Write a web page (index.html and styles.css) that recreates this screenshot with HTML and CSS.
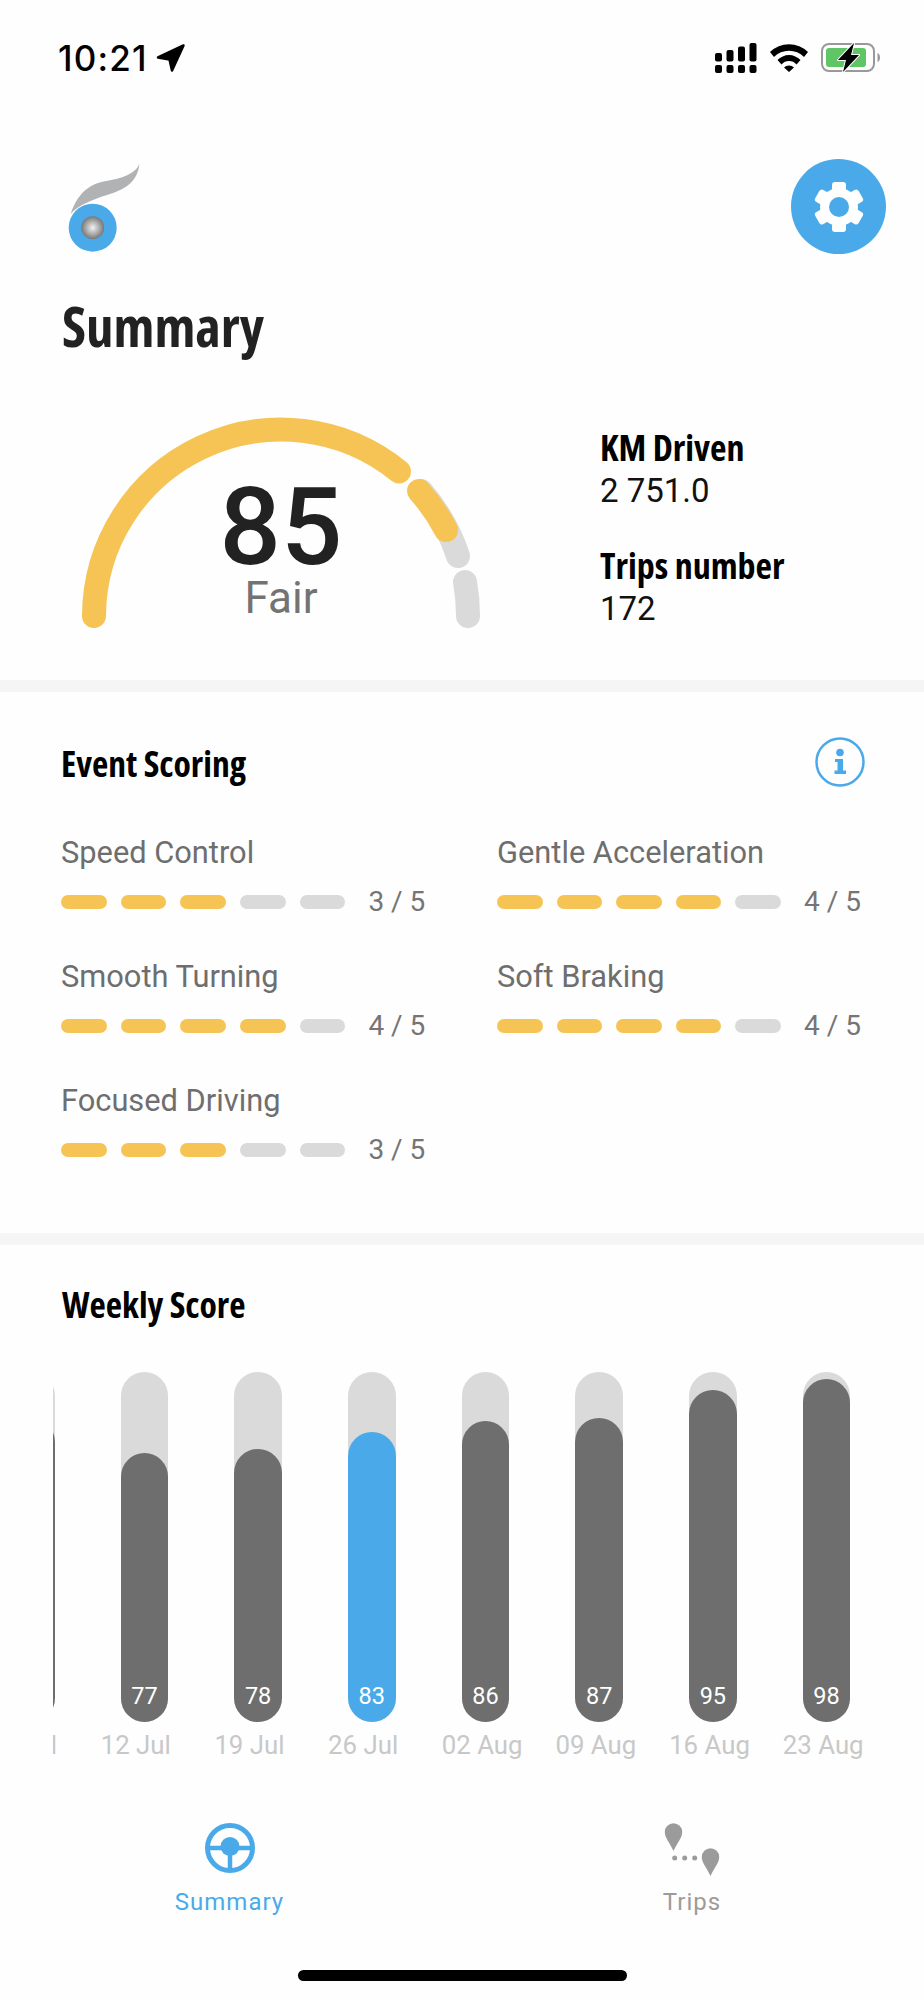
FILE: index.html
```html
<!DOCTYPE html>
<html lang="en">
<head>
<meta charset="utf-8">
<title>Summary</title>
<link rel="stylesheet" href="styles.css">
</head>
<body>
<div class="app">
  <header class="status">
    <div class="status-left">
      <span class="clock">10:21</span>
      <svg class="arrow" viewBox="0 0 30 30" width="30" height="30"><path d="M27.500 2.500 L2 14.500 L13.500 16.500 L16 27.500 Z" fill="#000" stroke="#000" stroke-width="2.500" stroke-linejoin="round"/></svg>
    </div>
    <div class="status-right">
      <svg viewBox="0 0 42 30" width="42" height="30"><g fill="#000"><rect x="0" y="22" width="7" height="8" rx="2"/><rect x="11.500" y="22" width="7" height="8" rx="2"/><rect x="23" y="22" width="7" height="8" rx="2"/><rect x="34.500" y="22" width="7" height="8" rx="2"/><rect x="0" y="10" width="7" height="8.500" rx="2"/><rect x="11.500" y="7" width="7" height="11.500" rx="2"/><rect x="23" y="3.500" width="7" height="15" rx="2"/><rect x="34.500" y="0" width="7" height="18.500" rx="2"/></g></svg>
      <svg viewBox="0 0 38 28" width="38" height="28"><path d="M0 8 A27 27 0 0 1 38 8 L34 13 A21 21 0 0 0 4 13 Z M7.500 16 A16 16 0 0 1 30.500 16 L26.500 20.500 A10 10 0 0 0 11.500 20.500 Z M14 23.500 A7 7 0 0 1 24 23.500 L19 28 Z" fill="#000"/></svg>
      <svg class="battery" viewBox="0 0 60 30" width="60" height="30"><rect x="1" y="1" width="52" height="27" rx="7" fill="none" stroke="#999" stroke-width="2"/><rect x="5" y="5" width="40" height="19" rx="3" fill="#5fc565"/><path d="M56.500 10 C58.500 11 59 12.500 59 14.500 C59 16.500 58.500 18 56.500 19 Z" fill="#999"/><path d="M33 0 L17 17 L25 17 L22 29 L38 12 L30 12 Z" fill="#000" stroke="#fff" stroke-width="2" stroke-linejoin="round" paint-order="stroke"/></svg>
    </div>
  </header>

  <div class="brand-row">
    <svg class="logo" viewBox="0 0 76 92" width="76" height="92">
      <defs><radialGradient id="ball"><stop offset="0" stop-color="#f2f2f2"/><stop offset="1" stop-color="#777"/></radialGradient></defs>
      <path d="M73.300 1.700 C69 14 50 17 40 19 C28 21 13 27 4.700 52 C12 43 28 37 41 33 C58 28 72 20 73.300 1.700 Z" fill="#b1b2b4"/>
      <circle cx="26.700" cy="65.700" r="24" fill="#4aaae9"/>
      <circle cx="26.700" cy="65.700" r="11.500" fill="url(#ball)"/>
    </svg>
    <button class="gear" type="button" aria-label="Settings">
      <svg viewBox="0 0 60 60" width="60" height="60">
        <g fill="#fff">
          <circle cx="30" cy="30" r="19"/>
          <rect x="23" y="5" width="14" height="50" rx="3"/>
          <rect x="23" y="5" width="14" height="50" rx="3" transform="rotate(60 30 30)"/>
          <rect x="23" y="5" width="14" height="50" rx="3" transform="rotate(120 30 30)"/>
        </g>
        <circle cx="30" cy="30" r="10" fill="#4aaae9"/>
      </svg>
    </button>
  </div>

  <h1 class="title">Summary</h1>

  <section class="hero">
    <div class="gauge">
      <svg viewBox="0 0 424 224" width="424" height="224">
        <g fill="none" stroke-width="24" stroke-linecap="round">
          <path d="M399 200 A187 187 0 0 0 396 166" stroke="#dadada"/>
          <path d="M389 140 A187 187 0 0 0 352 75" stroke="#dadada"/>
          <path d="M25 200 A187 187 0 0 1 330 55.500" stroke="#f6c455"/>
          <path d="M350 75 A187 187 0 0 1 377 114" stroke="#f6c455"/>
        </g>
      </svg>
      <div class="score">85</div>
      <div class="score-label">Fair</div>
    </div>
    <div class="stats">
      <div class="stat">
        <h3 class="stat-title">KM Driven</h3>
        <div class="stat-value">2 751.0</div>
      </div>
      <div class="stat">
        <h3 class="stat-title">Trips number</h3>
        <div class="stat-value">172</div>
      </div>
    </div>
  </section>

  <div class="divider"></div>

  <section class="events">
    <div class="section-head">
      <h2 class="section-title">Event Scoring</h2>
      <svg class="info" viewBox="0 0 50 50" width="50" height="50"><circle cx="25" cy="25" r="23.500" fill="none" stroke="#4aaae9" stroke-width="2.500"/><circle cx="25" cy="15.500" r="3.800" fill="#4aaae9"/><path d="M20 22 H28 V33.500 H31 V37 H19.500 V33.500 H22.500 V25 H20 Z" fill="#4aaae9"/></svg>
    </div>
    <div class="event-grid">
      <div class="event">
        <div class="event-name">Speed Control</div>
        <div class="event-line"><span class="dash on"></span><span class="dash on"></span><span class="dash on"></span><span class="dash"></span><span class="dash"></span><span class="event-score">3 / 5</span></div>
      </div>
      <div class="event">
        <div class="event-name">Gentle Acceleration</div>
        <div class="event-line"><span class="dash on"></span><span class="dash on"></span><span class="dash on"></span><span class="dash on"></span><span class="dash"></span><span class="event-score">4 / 5</span></div>
      </div>
      <div class="event">
        <div class="event-name">Smooth Turning</div>
        <div class="event-line"><span class="dash on"></span><span class="dash on"></span><span class="dash on"></span><span class="dash on"></span><span class="dash"></span><span class="event-score">4 / 5</span></div>
      </div>
      <div class="event">
        <div class="event-name">Soft Braking</div>
        <div class="event-line"><span class="dash on"></span><span class="dash on"></span><span class="dash on"></span><span class="dash on"></span><span class="dash"></span><span class="event-score">4 / 5</span></div>
      </div>
      <div class="event">
        <div class="event-name">Focused Driving</div>
        <div class="event-line"><span class="dash on"></span><span class="dash on"></span><span class="dash on"></span><span class="dash"></span><span class="dash"></span><span class="event-score">3 / 5</span></div>
      </div>
    </div>
  </section>

  <div class="divider"></div>

  <section class="weekly">
    <h2 class="section-title">Weekly Score</h2>
    <div class="chart">
      <div class="chart-track">
        <div class="week"><div class="bar"><div class="fill" style="height:87%"><span class="val">87</span></div></div><div class="date">05 Jul</div></div>
        <div class="week"><div class="bar"><div class="fill" style="height:77%"><span class="val">77</span></div></div><div class="date">12 Jul</div></div>
        <div class="week"><div class="bar"><div class="fill" style="height:78%"><span class="val">78</span></div></div><div class="date">19 Jul</div></div>
        <div class="week"><div class="bar"><div class="fill current" style="height:83%"><span class="val">83</span></div></div><div class="date">26 Jul</div></div>
        <div class="week"><div class="bar"><div class="fill" style="height:86%"><span class="val">86</span></div></div><div class="date">02 Aug</div></div>
        <div class="week"><div class="bar"><div class="fill" style="height:87%"><span class="val">87</span></div></div><div class="date">09 Aug</div></div>
        <div class="week"><div class="bar"><div class="fill" style="height:95%"><span class="val">95</span></div></div><div class="date">16 Aug</div></div>
        <div class="week"><div class="bar"><div class="fill" style="height:98%"><span class="val">98</span></div></div><div class="date">23 Aug</div></div>
      </div>
    </div>
  </section>

  <nav class="tabs">
    <div class="tab active">
      <svg viewBox="0 0 50 50" width="50" height="50"><circle cx="25" cy="25" r="22.500" fill="none" stroke="#4aaae9" stroke-width="5"/><path d="M3 25 H47 M25 25 V47" stroke="#4aaae9" stroke-width="4.500" fill="none"/><circle cx="25" cy="23.500" r="9.500" fill="#4aaae9"/></svg>
      <span class="tab-label">Summary</span>
    </div>
    <div class="tab">
      <svg viewBox="0 0 56 54" width="56" height="54"><g fill="#9b9b9b"><path d="M9.500 28 C6 20 0.800 15 0.800 9 A8.700 8.700 0 0 1 18.200 9 C18.200 15 13 20 9.500 28 Z"/><path d="M46.500 53 C43 45 37.800 40 37.800 34 A8.700 8.700 0 0 1 55.200 34 C55.200 40 50 45 46.500 53 Z"/><circle cx="10.700" cy="35" r="2.500"/><circle cx="20.700" cy="35" r="2.500"/><circle cx="30.700" cy="35" r="2.500"/></g></svg>
      <span class="tab-label">Trips</span>
    </div>
  </nav>

  <div class="home-wrap"><div class="home"></div></div>
</div>
</body>
</html>
```

FILE: styles.css
```css
* { box-sizing: border-box; }
html, body { margin: 0; padding: 0; background: #fefefe; }
.app { width: 924px; height: 2000px; overflow: hidden; font-family: "Roboto", sans-serif; color: #222; }
h1, h2, h3 { margin: 0; font-family: "Open Sans", sans-serif; font-stretch: 75%; font-weight: 700; }

.status { height: 116px; display: flex; justify-content: space-between; align-items: center; padding: 0 43px 0 58px; }
.status-left { display: flex; align-items: center; gap: 8px; }
.clock { font-family: "Inter", sans-serif; font-size: 35px; font-weight: 500; line-height: 40px; color: #000; letter-spacing: 1.2px; }
.status-right { display: flex; align-items: center; gap: 13px; }

.brand-row { display: flex; justify-content: space-between; align-items: flex-start; padding: 43px 38px 0 66px; height: 137px; }
.logo { margin-top: 3px; display: block; }
.gear { width: 95px; height: 95px; border: 0; padding: 0; border-radius: 50%; background: #4aaae9; display: flex; align-items: center; justify-content: center; }

.title { font-size: 54.800px; line-height: 70px; color: #222; padding-left: 62px; margin-top: 38px; }

.hero { display: flex; align-items: flex-start; padding: 0 0 0 69px; margin-top: 55px; height: 264px; }
.gauge { position: relative; width: 531px; height: 224px; }
.gauge svg { display: block; }
.score { position: absolute; left: 0; width: 424px; text-align: center; top: 48px; font-size: 108px; line-height: 126px; font-weight: 500; color: #222; }
.score-label { position: absolute; left: 0; width: 424px; text-align: center; top: 156px; font-size: 44px; line-height: 52px; color: #737373; }
.stats { display: flex; flex-direction: column; gap: 33px; margin-top: 9px; }
.stat-title { font-size: 36px; line-height: 46px; color: #000; }
.stat-value { font-size: 33px; line-height: 39px; color: #111; font-weight: 400; }

.divider { height: 12px; background: #f5f5f5; }

.events { height: 541px; padding: 0 62px 0 61px; }
.section-head { display: flex; justify-content: space-between; align-items: center; height: 142px; }
.section-title { font-size: 35.600px; line-height: 46px; color: #000; }
.info { margin-right: -3px; margin-top: -3px; }
.event-grid { display: grid; grid-template-columns: 436px 364px; row-gap: 43.500px; margin-top: 1px; }
.event-name { font-size: 30.800px; line-height: 36px; color: #6e6e6e; }
.event-line { display: flex; align-items: center; gap: 14px; margin-top: 16.500px; height: 28px; }
.dash { width: 45.700px; height: 14px; border-radius: 7px; background: #dadada; }
.dash.on { background: #f6c455; }
.event-score { font-size: 28px; line-height: 28px; color: #757575; margin-left: 9px; white-space: nowrap; }

.weekly { height: 534px; padding: 36px 0 0; }
.weekly .section-title { padding-left: 62px; }
.chart { margin: 45px 0 0 53px; overflow: hidden; width: 871px; }
.chart-track { display: flex; margin-left: -66px; }
.week { flex: 0 0 113.700px; }
.bar { position: relative; width: 47.500px; height: 350px; margin-left: 20px; border-radius: 24px; background: #dadada; }
.fill { position: absolute; left: 0; right: 0; bottom: 0; border-radius: 24px; background: #6e6e6e; display: flex; align-items: flex-end; justify-content: center; padding-bottom: 12px; }
.fill.current { background: #4aaae9; }
.val { font-size: 23.500px; line-height: 28px; color: #fff; }
.date { font-size: 25.800px; line-height: 30px; color: #c8c8c8; margin-top: 8px; white-space: nowrap; }

.tabs { display: flex; position: absolute; top: 1820px; left: 0; width: 924px; }
.tab { position: absolute; top: 3px; display: flex; flex-direction: column; align-items: center; }
.tab:first-child { left: 176px; width: 107px; }
.tab:last-child { left: 664px; width: 56px; }
.tab svg { display: block; }
.tab-label { font-size: 24px; line-height: 28px; letter-spacing: 1px; color: #9b9b9b; margin-top: 11px; white-space: nowrap; }
.tab.active .tab-label { color: #4aaae9; margin-top: 15px; }

.home-wrap { position: absolute; top: 1970px; left: 0; width: 924px; display: flex; justify-content: center; }
.home { width: 329px; height: 11px; border-radius: 6px; background: #000; }
```
